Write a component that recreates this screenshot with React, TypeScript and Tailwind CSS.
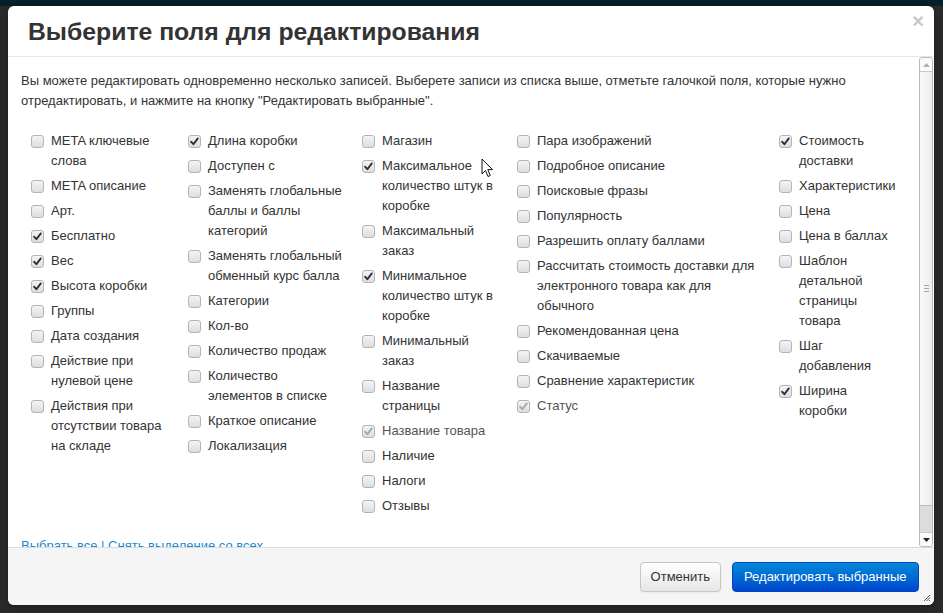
type Mark = 0 | 1 | 2;
type Field = [string, Mark];

const columns: { width: string; label: string; fields: Field[] }[] = [
  {
    width: "w-[157px]",
    label: "max-w-[120px]",
    fields: [
      ["META ключевые слова", 0],
      ["META описание", 0],
      ["Арт.", 0],
      ["Бесплатно", 1],
      ["Вес", 1],
      ["Высота коробки", 1],
      ["Группы", 0],
      ["Дата создания", 0],
      ["Действие при нулевой цене", 0],
      ["Действия при отсутствии товара на складе", 0],
    ],
  },
  {
    width: "w-[174px]",
    label: "max-w-[137px]",
    fields: [
      ["Длина коробки", 1],
      ["Доступен с", 0],
      ["Заменять глобальные баллы и баллы категорий", 0],
      ["Заменять глобальный обменный курс балла", 0],
      ["Категории", 0],
      ["Кол-во", 0],
      ["Количество продаж", 0],
      ["Количество элементов в списке", 0],
      ["Краткое описание", 0],
      ["Локализация", 0],
    ],
  },
  {
    width: "w-[155px]",
    label: "max-w-[114px]",
    fields: [
      ["Магазин", 0],
      ["Максимальное количество штук в коробке", 1],
      ["Максимальный заказ", 0],
      ["Минимальное количество штук в коробке", 1],
      ["Минимальный заказ", 0],
      ["Название страницы", 0],
      ["Название товара", 2],
      ["Наличие", 0],
      ["Налоги", 0],
      ["Отзывы", 0],
    ],
  },
  {
    width: "w-[262px]",
    label: "max-w-[228px]",
    fields: [
      ["Пара изображений", 0],
      ["Подробное описание", 0],
      ["Поисковые фразы", 0],
      ["Популярность", 0],
      ["Разрешить оплату баллами", 0],
      ["Рассчитать стоимость доставки для электронного товара как для обычного", 0],
      ["Рекомендованная цена", 0],
      ["Скачиваемые", 0],
      ["Сравнение характеристик", 0],
      ["Статус", 2],
    ],
  },
  {
    width: "flex-1",
    label: "max-w-[97px]",
    fields: [
      ["Стоимость доставки", 1],
      ["Характеристики", 0],
      ["Цена", 0],
      ["Цена в баллах", 0],
      ["Шаблон детальной страницы товара", 0],
      ["Шаг добавления", 0],
      ["Ширина коробки", 1],
    ],
  },
];

function Box({ mark }: { mark: Mark }) {
  return (
    <span className="mt-[4px] flex h-[13px] w-[13px] shrink-0 items-center justify-center rounded-[3px] border border-[#b4b4b4] bg-gradient-to-b from-[#f4f4f4] to-[#dedede] shadow-[0_1px_0_rgba(255,255,255,0.8)]">
      {mark > 0 && (
        <svg width="9" height="9" viewBox="0 0 9 9">
          <path
            d="M1.2 4.8 L3.4 7.2 L7.8 1.4"
            fill="none"
            stroke={mark === 1 ? "#2e2e2e" : "#a8a8a8"}
            strokeWidth="1.9"
            strokeLinecap="round"
            strokeLinejoin="round"
          />
        </svg>
      )}
    </span>
  );
}

export default function App() {
  return (
    <div className="relative flex h-[613px] w-[943px] flex-col overflow-hidden bg-[#2a2a2a] font-['Liberation_Sans',Arial,sans-serif] text-[#333]">
      <div className="h-[6px] shrink-0 bg-[#03202b]" />
      <div className="ml-[8px] flex h-[599px] w-[926px] flex-col overflow-hidden rounded-[6px] bg-white shadow-[0_3px_7px_rgba(0,0,0,0.3)]">
        {/* header */}
        <div className="flex h-[51px] shrink-0 items-start justify-between border-b border-[#e8e8e8] pl-[20px] pr-[10px]">
          <h3 className="mt-[12px] text-[24.75px] font-bold leading-[28px] text-[#333]">
            Выберите поля для редактирования
          </h3>
          <span className="mt-[4px] text-[20px] font-bold leading-[22px] text-[#c8c8c8]">×</span>
        </div>

        {/* body */}
        <div className="flex h-[490px] shrink-0">
          <div className="flex-1 overflow-hidden pl-[13px] pt-[14px] text-[13px] leading-[20px]">
            <p>
              Вы можете редактировать одновременно несколько записей. Выберете записи из списка выше, отметьте
              галочкой поля, которые нужно
              <br />
              отредактировать, и нажмите на кнопку "Редактировать выбранные".
            </p>
            <div className="mt-[20px] flex pl-[10px]">
              {columns.map((col, i) => (
                <div key={i} className={`${col.width} flex flex-col gap-[5px]`}>
                  {col.fields.map(([name, mark]) => (
                    <label key={name} className="flex items-start gap-[7px]">
                      <Box mark={mark} />
                      <span className={mark === 2 ? `${col.label} text-[#555]` : col.label}>{name}</span>
                    </label>
                  ))}
                </div>
              ))}
            </div>
            <div className="mt-[20px] text-[#1a8ad0]">
              <a>Выбрать все</a> | <a>Снять выделение со всех</a>
            </div>
          </div>

          {/* scrollbar */}
          <div className="mr-[1px] flex w-[14px] flex-col overflow-hidden rounded-[3px] border border-[#b9b9b9] bg-[#f0f0f0]">
            <div className="flex h-[14px] items-center justify-center border-b border-[#c8c8c8] bg-[#fafafa]">
              <svg width="7" height="4" viewBox="0 0 7 4">
                <path d="M0 4 L3.5 0 L7 4 Z" fill="#b0b0b0" />
              </svg>
            </div>
            <div className="flex h-[434px] items-center justify-center border-b border-[#bdbdbd] bg-gradient-to-r from-[#fafafa] to-[#ececec]">
              <div className="flex flex-col gap-[2px]">
                <span className="h-px w-[5px] bg-[#a8a8a8]" />
                <span className="h-px w-[5px] bg-[#a8a8a8]" />
                <span className="h-px w-[5px] bg-[#a8a8a8]" />
              </div>
            </div>
            <div className="flex-1 bg-[#dcdcdc]" />
            <div className="flex h-[14px] items-center justify-center border-t border-[#c8c8c8] bg-[#fafafa]">
              <svg width="7" height="4" viewBox="0 0 7 4">
                <path d="M0 0 L7 0 L3.5 4 Z" fill="#222" />
              </svg>
            </div>
          </div>
        </div>

        {/* footer */}
        <div className="relative flex flex-1 items-start justify-end gap-[11px] border-t border-[#dcdcdc] bg-[#f5f5f5] pr-[15px] pt-[14px]">
          <button className="h-[30px] rounded-[4px] border border-[#c6c6c6] bg-gradient-to-b from-white to-[#e6e6e6] px-[9.5px] text-[13px] text-[#333] shadow-[inset_0_1px_0_rgba(255,255,255,0.2),0_1px_2px_rgba(0,0,0,0.05)]">
            Отменить
          </button>
          <button className="h-[30px] rounded-[4px] border border-[#0044cc] bg-gradient-to-b from-[#0a88d8] to-[#0046cc] px-[11.5px] text-[13px] text-white">
            Редактировать выбранные
          </button>
          <svg className="absolute bottom-[3px] right-[3px]" width="8" height="8" viewBox="0 0 8 8">
            <path d="M7 1 L1 7 M7 3.5 L3.5 7 M7 6 L6 7" stroke="#555" strokeWidth="1" />
          </svg>
        </div>
      </div>

      {/* mouse cursor */}
      <svg className="absolute left-[481px] top-[158px]" width="13" height="20" viewBox="0 0 13 20">
        <path d="M1 1 L1 16 L4.5 12.5 L7 18.5 L9.3 17.5 L6.8 11.6 L11.5 11.6 Z" fill="white" stroke="#111" strokeWidth="1" strokeLinejoin="round" />
      </svg>
    </div>
  );
}
